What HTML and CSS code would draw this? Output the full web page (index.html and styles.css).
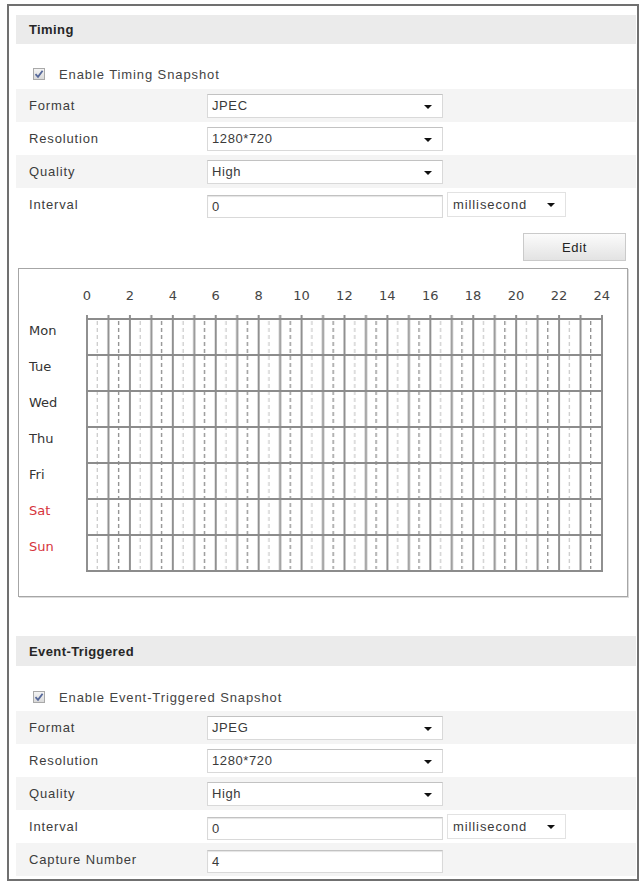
FILE: index.html
```html
<!DOCTYPE html>
<html>
<head>
<meta charset="utf-8">
<link rel="stylesheet" href="styles.css">
</head>
<body>
<div class="frame">
  <div class="section-head">Timing</div>
  <div class="check-row">
    <span class="checkbox"><svg viewBox="0 0 12 12" width="12" height="12"><path d="M2.5 6.2 L5 8.8 L9.6 2.8" fill="none" stroke="#56689a" stroke-width="1.8"/></svg></span>
    <span class="check-label">Enable Timing Snapshot</span>
  </div>
  <div class="row shaded"><span class="label">Format</span><span class="select">JPEC</span></div>
  <div class="row"><span class="label">Resolution</span><span class="select">1280*720</span></div>
  <div class="row shaded"><span class="label">Quality</span><span class="select">High</span></div>
  <div class="row"><span class="label">Interval</span><span class="input">0</span><span class="select unit">millisecond</span></div>
  <div class="edit-row"><span class="button">Edit</span></div>
  <div class="schedule">
    <div class="hours">
      <span>0</span><span>2</span><span>4</span><span>6</span><span>8</span><span>10</span><span>12</span><span>14</span><span>16</span><span>18</span><span>20</span><span>22</span><span>24</span>
    </div>
    <div class="sched-body">
      <div class="days">
        <span>Mon</span><span>Tue</span><span>Wed</span><span>Thu</span><span>Fri</span><span class="weekend">Sat</span><span class="weekend">Sun</span>
      </div>
      <svg class="grid" width="520" height="258" viewBox="0 0 520 258">
        <defs>
          <pattern id="cols" patternUnits="userSpaceOnUse" x="1" y="0" width="42.917" height="258">
            <rect x="0" y="0" width="2" height="257" fill="#909090"/>
            <rect x="21.458" y="0" width="2" height="257" fill="#909090"/>
            <line x1="11.229" y1="6" x2="11.229" y2="254" stroke="#bdbdbd" stroke-width="1" stroke-dasharray="4 3"/>
            <line x1="32.688" y1="6" x2="32.688" y2="254" stroke="#6a6a6a" stroke-width="1" stroke-dasharray="4 3"/>
          </pattern>
        </defs>
        <rect x="1" y="0" width="517" height="258" fill="url(#cols)"/>
        <g stroke="#8c8c8c" stroke-width="2">
          <line x1="1" y1="4" x2="518" y2="4"/>
          <line x1="1" y1="40" x2="518" y2="40"/>
          <line x1="1" y1="76" x2="518" y2="76"/>
          <line x1="1" y1="112" x2="518" y2="112"/>
          <line x1="1" y1="148" x2="518" y2="148"/>
          <line x1="1" y1="184" x2="518" y2="184"/>
          <line x1="1" y1="220" x2="518" y2="220"/>
          <line x1="1" y1="256" x2="518" y2="256"/>
        </g>
      </svg>
    </div>
  </div>
  <div class="section-head event">Event-Triggered</div>
  <div class="check-row event">
    <span class="checkbox"><svg viewBox="0 0 12 12" width="12" height="12"><path d="M2.5 6.2 L5 8.8 L9.6 2.8" fill="none" stroke="#56689a" stroke-width="1.8"/></svg></span>
    <span class="check-label">Enable Event-Triggered Snapshot</span>
  </div>
  <div class="row shaded"><span class="label">Format</span><span class="select">JPEG</span></div>
  <div class="row"><span class="label">Resolution</span><span class="select">1280*720</span></div>
  <div class="row shaded"><span class="label">Quality</span><span class="select">High</span></div>
  <div class="row"><span class="label">Interval</span><span class="input">0</span><span class="select unit">millisecond</span></div>
  <div class="row shaded"><span class="label">Capture Number</span><span class="input">4</span></div>
</div>
</body>
</html>
```
FILE: styles.css
```css
* { box-sizing: border-box; }
html, body { margin: 0; padding: 0; background: #fff; }
body {
  font-family: "Liberation Sans", Arial, sans-serif;
  font-size: 13px;
  color: #3a3a3a;
}
.frame {
  margin: 4px 0 0 7px;
  width: 632px;
  height: 877px;
  border: 2px solid #707070;
  padding: 9px 1px 2px 7px;
  display: flex;
  flex-direction: column;
}
.section-head {
  height: 29px;
  background: #ebebeb;
  font-weight: bold;
  color: #262626;
  letter-spacing: 0.4px;
  padding-left: 13px;
  display: flex;
  align-items: center;
  flex-shrink: 0;
}
.section-head.event {
  margin-top: 39px;
  height: 30px;
}
.check-row {
  height: 45px;
  display: flex;
  align-items: center;
  padding: 15px 0 0 17px;
  flex-shrink: 0;
}
.check-row.event { padding-top: 17px; }
.checkbox {
  width: 12px;
  height: 12px;
  border: 1px solid #a9a9a9;
  background: linear-gradient(#f4f4f4, #d9d9d9);
  display: flex;
  align-items: center;
  justify-content: center;
  margin-right: 14px;
}
.checkbox svg { display: block; margin: -1px; }
.check-label { letter-spacing: 0.9px; color: #444; }
.row {
  height: 33px;
  display: flex;
  align-items: center;
  flex-shrink: 0;
}
.row.shaded { background: #f4f4f4; }
.label {
  width: 191px;
  padding-left: 13px;
  letter-spacing: 0.85px;
  color: #3c3c3c;
}
.select, .input {
  width: 236px;
  height: 24px;
  background: #fff;
  border: 1px solid #d9d9d9;
  border-top-color: #c2c2c2;
  padding-left: 4px;
  display: flex;
  align-items: center;
  letter-spacing: 0.6px;
  color: #3a3a3a;
  position: relative;
}
.select::after {
  content: "";
  position: absolute;
  right: 10px;
  top: 10px;
  border-left: 4px solid transparent;
  border-right: 4px solid transparent;
  border-top: 4px solid #111;
}
.input {
  height: 23px;
  margin-top: 3px;
  box-shadow: inset 0 1px 1px #e4e4e4;
}
.select.unit {
  width: 119px;
  margin-left: 4px;
  height: 25px;
  padding-left: 5px;
  letter-spacing: 0.9px;
  border-color: #e2e2e2;
}
.edit-row {
  display: flex;
  justify-content: flex-end;
  padding-right: 10px;
  margin-top: 12px;
  flex-shrink: 0;
}
.button {
  width: 103px;
  height: 28px;
  border: 1px solid #cacaca;
  background: linear-gradient(#fbfbfb, #e3e3e3);
  display: flex;
  align-items: center;
  justify-content: center;
  color: #222;
  letter-spacing: 0.6px;
  font-size: 13px;
}
.schedule {
  margin: 7px 0 0 2px;
  width: 610px;
  height: 329px;
  border: 1px solid #a6a6a6;
  box-shadow: 1px 1px 0 #dcdcdc;
  flex-shrink: 0;
  font-family: "DejaVu Sans", Verdana, sans-serif;
  font-size: 13px;
}
.hours {
  display: flex;
  margin: 17px 0 0 46.5px;
  height: 20px;
  color: #454545;
}
.hours span {
  width: 42.917px;
  text-align: center;
  line-height: 20px;
  flex-shrink: 0;
}
.sched-body {
  display: flex;
  margin-top: 7px;
  padding-left: 10px;
}
.days {
  width: 56px;
  display: flex;
  flex-direction: column;
  color: #333;
}
.days span { height: 36px; line-height: 36px; }
.days .weekend { color: #d6343c; }
.grid { display: block; margin-top: 2px; }
```
